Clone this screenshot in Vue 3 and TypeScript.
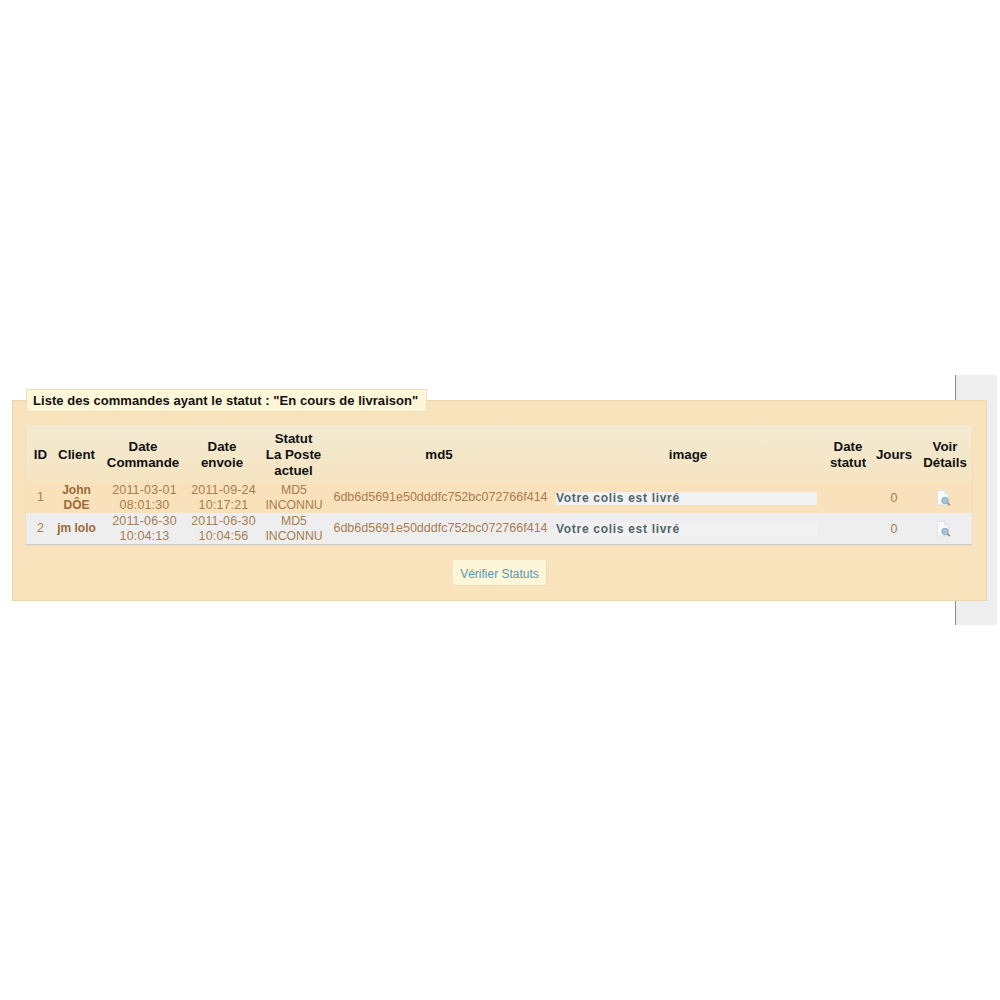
<script setup lang="ts">
interface Order {
  id: number
  client: string
  ordered: string[]
  sent: string[]
}
const orders: Order[] = [
  { id: 1, client: 'John DÔE', ordered: ['2011-03-01', '08:01:30'], sent: ['2011-09-24', '10:17:21'] },
  { id: 2, client: 'jm lolo', ordered: ['2011-06-30', '10:04:13'], sent: ['2011-06-30', '10:04:56'] },
]
</script>

<template>
  <main class="page">
    <div class="stage">
      <div class="side"></div>
      <section class="panel">
        <h2 class="legend">Liste des commandes ayant le statut : "En cours de livraison"</h2>
        <table class="orders">
          <colgroup>
            <col class="c-id" /><col class="c-client" /><col class="c-ordered" />
            <col class="c-sent" /><col class="c-state" /><col class="c-md5" />
            <col class="c-image" /><col class="c-date" /><col class="c-days" />
            <col class="c-view" />
          </colgroup>
          <thead>
            <tr>
              <th>ID</th><th>Client</th><th>Date<br />Commande</th><th>Date<br />envoie</th>
              <th>Statut<br />La Poste<br />actuel</th><th class="h-md5">md5</th><th>image</th>
              <th>Date<br />statut</th><th>Jours</th><th>Voir<br />Détails</th>
            </tr>
          </thead>
          <tbody>
            <tr v-for="o in orders" :key="o.id">
              <td>{{ o.id }}</td>
              <td class="client">{{ o.client }}</td>
              <td class="date">{{ o.ordered[0] }}<br />{{ o.ordered[1] }}</td>
              <td class="date">{{ o.sent[0] }}<br />{{ o.sent[1] }}</td>
              <td class="state">MD5<br />INCONNU</td>
              <td>6db6d5691e50dddfc752bc072766f414</td>
              <td class="image"><div class="status">Votre colis est livré</div></td>
              <td></td>
              <td class="days">0</td>
              <td class="view">
                <svg class="icon" width="15" height="16" viewBox="0 0 15 16" aria-hidden="true">
                  <path d="M1.5.5h7.5l3.5 3.5v11h-11z" fill="#fafbfd" stroke="#dde0e5" />
                  <path d="M9 .5v3.5h3.5" fill="#eceef2" stroke="#d8dbe1" />
                  <circle cx="9" cy="10.5" r="3.3" fill="#a8c2de" stroke="#8fabcb" />
                  <path d="M11.6 13l2.2 2.2" stroke="#ad8a68" stroke-width="1.8" />
                </svg>
              </td>
            </tr>
          </tbody>
        </table>
        <div class="actions"><button class="verify" type="button">Vérifier Statuts</button></div>
      </section>
    </div>
  </main>
</template>

<style scoped>
.page {
  height: 1000px;
  padding-top: 375px;
  box-sizing: border-box;
  background: #fff;
  font-family: "Liberation Sans", Arial, sans-serif;
}
.stage {
  position: relative;
  height: 250px;
  padding: 25px 0 0 12px;
  box-sizing: border-box;
}
.side {
  position: absolute;
  left: 955px;
  top: 0;
  width: 42px;
  height: 250px;
  box-sizing: border-box;
  background: #eeeeee;
  border-left: 1px solid #8f8f8f;
}
.panel {
  position: relative;
  width: 975px;
  height: 201px;
  padding: 24px 13px 0;
  box-sizing: border-box;
  background: #f8e3bd;
  border: 1px solid #e8d5b0;
}
.legend {
  position: absolute;
  left: 13px;
  top: -12px;
  margin: 0;
  height: 23px;
  padding: 0 8px 0 6px;
  box-sizing: border-box;
  background: #fdf6d8;
  border: 1px solid #eadfb8;
  color: #111;
  font-size: 13px;
  font-weight: 700;
  letter-spacing: 0.05px;
  line-height: 21px;
  white-space: nowrap;
}
.orders {
  width: 946px;
  table-layout: fixed;
  border-collapse: collapse;
  box-shadow: 0 1px 1px #c9c9c9;
  font-size: 12.5px;
}
.c-id { width: 29px; }
.c-client { width: 43px; }
.c-ordered { width: 90px; }
.c-sent { width: 68px; }
.c-state { width: 75px; }
.c-md5 { width: 219px; }
.c-image { width: 276px; }
.c-date { width: 44px; }
.c-days { width: 48px; }
.c-view { width: 54px; }
th {
  height: 57px;
  padding: 2px 0 0;
  box-sizing: border-box;
  background: linear-gradient(#f3ead2, #f5e4c1);
  color: #111;
  font-size: 13.3px;
  font-weight: 700;
  line-height: 16px;
  text-align: center;
}
.h-md5 { padding-right: 3px; }
td {
  height: 31px;
  padding: 0;
  box-sizing: border-box;
  color: #a87d50;
  line-height: 15px;
  text-align: center;
  white-space: nowrap;
}
tbody tr:nth-child(1) td { background: #f9e1bb; }
tbody tr:nth-child(2) td { background: #eeeeee; }
.date { letter-spacing: 0.15px; padding-left: 3px; }
.state { font-size: 12.25px; padding-left: 1px; }
.days { padding-top: 2px; }
.client {
  color: #9a6a37;
  font-size: 12px;
  font-weight: 700;
  white-space: normal;
}
.image { text-align: left; padding: 2px 0 0 6px; }
.status {
  width: 261px;
  height: 13px;
  background: #f2f2f2;
  color: #50646c;
  font-size: 12px;
  font-weight: 700;
  letter-spacing: 0.7px;
  line-height: 13px;
  padding-left: 0;
  box-sizing: border-box;
}
.view { padding-right: 3px; }
.icon { display: block; margin: 0 auto; }
.actions { display: flex; justify-content: center; margin-top: 16px; }
.verify {
  width: 93px;
  height: 25px;
  padding: 2px 0 0;
  background: #fdf6d8;
  border: 0;
  box-shadow: 1px 1px 0 #ecdcb8;
  color: #5b95b2;
  font-family: inherit;
  font-size: 12px;
}
</style>
